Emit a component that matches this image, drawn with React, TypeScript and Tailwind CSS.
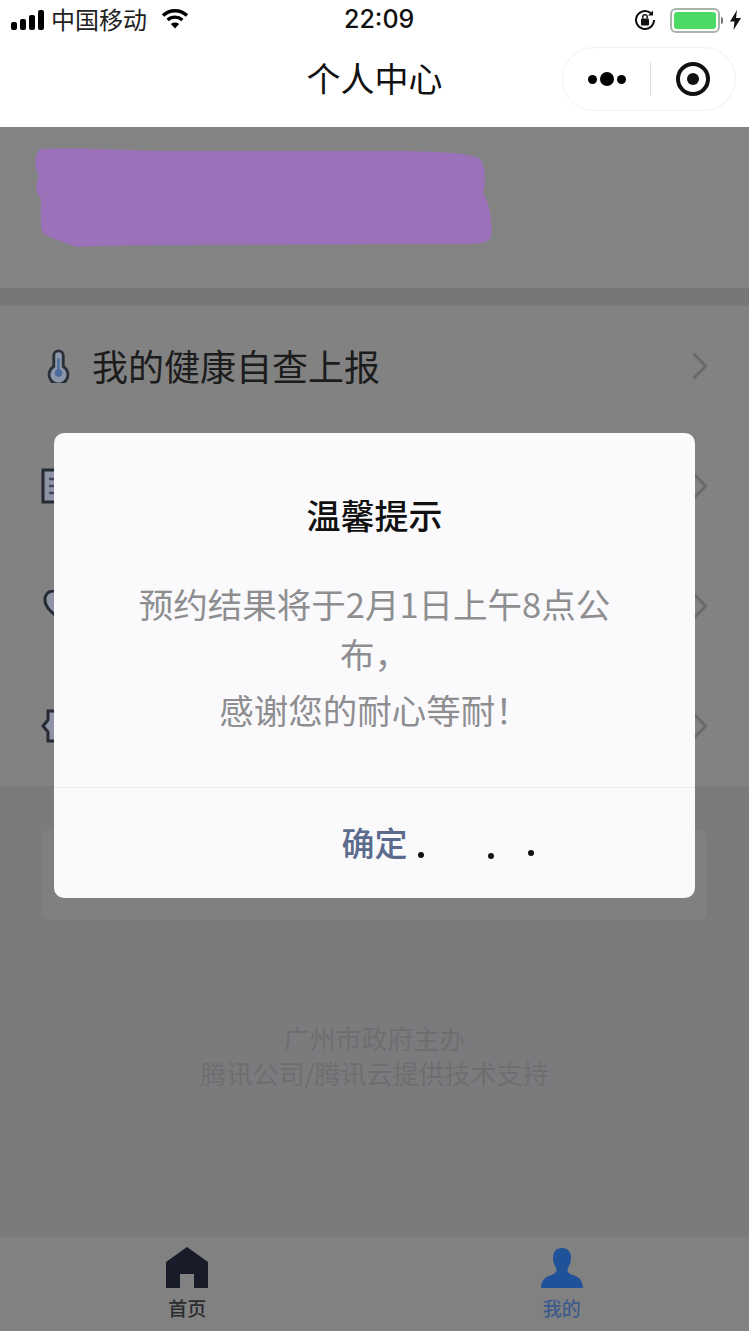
import type { ReactNode } from "react";
import { ChevronRight } from "lucide-react";

const CJK = "font-['Noto_Sans_CJK_SC','Noto_Sans',sans-serif]";

function StatusBar() {
  return (
    <div className="relative flex h-[40px] items-center bg-white pl-[11px] pr-[8px]">
      <div className="flex items-end gap-[3px] pb-[1px]">
        <span className="h-[8px] w-[6px] rounded-[2px] bg-black" />
        <span className="h-[11px] w-[6px] rounded-[2px] bg-black" />
        <span className="h-[15px] w-[6px] rounded-[2px] bg-black" />
        <span className="h-[20px] w-[6px] rounded-[2px] bg-black" />
      </div>
      <span className="-mt-[3px] ml-[7px] text-[24px] leading-none text-[#222]">中国移动</span>
      <svg className="ml-[14px] mb-[3px]" width="28" height="21" viewBox="0 0 28 21" fill="none" stroke="#000" strokeWidth="3.4">
        <path d="M2 7.5c7-6.4 17-6.4 24 0" />
        <path d="M6.6 12c4.400-3.800 10.400-3.800 14.800 0" />
        <path d="M14 20.500l-4.200-4.600c2.500-1.800 5.900-1.800 8.400 0z" fill="#000" stroke="none" />
      </svg>
      <span className="absolute left-[344px] top-[4px] font-['Inter',sans-serif] text-[25px] font-medium leading-[30px] text-[#111]">22:09</span>
      <div className="ml-auto flex items-center">
        <svg width="24" height="24" viewBox="0 0 24 24" fill="none" stroke="#111" strokeWidth="2">
          <path d="M21 12a9 9 0 1 1-3-6.700" />
          <path d="M20 2.500v5h-5" fill="#111" stroke="none" />
          <rect x="8" y="10.500" width="8" height="7" rx="1" fill="#111" stroke="none" />
          <path d="M9.800 10.500V9a2.200 2.200 0 0 1 4.400 0v1.500" strokeWidth="1.500" />
        </svg>
        <div className="ml-[13px] flex h-[25px] w-[50px] items-center rounded-[6px] border-2 border-[#a9b5a9] p-[2px]">
          <div className="h-full w-full rounded-[3px] bg-[#4cd964]" />
        </div>
        <span className="ml-[1px] h-[7px] w-[2px] rounded-r-full bg-[#777]" />
        <svg className="ml-[7px]" width="11" height="20" viewBox="0 0 11 20">
          <path d="M7 0L0 11.500h4.500L3.500 20 11 8H6z" fill="#111" />
        </svg>
      </div>
    </div>
  );
}

function NavBar() {
  return (
    <div className="relative flex h-[87px] items-center justify-center bg-white">
      <span className="-mt-[11px] text-[34px] leading-none text-[#111]">个人中心</span>
      <div className="absolute left-[562px] top-[7px] flex h-[64px] w-[174px] items-center rounded-full border border-[#f1f1f1] bg-white">
        <div className="flex w-[87px] items-center justify-center gap-[3px]">
          <span className="h-[9px] w-[9px] rounded-full bg-black" />
          <span className="h-[14px] w-[14px] rounded-full bg-black" />
          <span className="h-[9px] w-[9px] rounded-full bg-black" />
        </div>
        <span className="h-[34px] w-px bg-[#dcdcdc]" />
        <div className="flex flex-1 items-center justify-center">
          <span className="flex h-[34px] w-[34px] items-center justify-center rounded-full border-[4px] border-[#111]">
            <span className="h-[12px] w-[12px] rounded-full bg-[#111]" />
          </span>
        </div>
      </div>
    </div>
  );
}

// the hand-painted purple smear covering the user's name
function Scribble() {
  return (
    <svg width="462" height="100" viewBox="0 0 462 100">
      <path
        d="M6 2C60 0 90 4 150 4L370 4C410 5 436 6 446 12C452 19 452 38 449 45C456 56 459 80 457 90C453 98 440 97 420 97L150 98C100 98 60 99 42 100C34 96 24 95 10 87C5 80 7 64 7 52C1 46 1 36 5 29C0 20 0 8 6 2Z"
        fill="#9b72b9"
      />
    </svg>
  );
}

function ThermometerIcon() {
  return (
    <svg width="23" height="34" viewBox="0 0 24 36" fill="none">
      <path
        d="M7 18.500V7a5 5 0 0 1 10 0v11.500a10 10 0 1 1-10 0z"
        stroke="#2a3038"
        strokeWidth="3"
        fill="#8d95a8"
      />
      <path d="M12 11v14" stroke="#4a6ca0" strokeWidth="2.500" strokeLinecap="round" />
      <circle cx="12" cy="25.500" r="4" fill="#4a6ca0" />
    </svg>
  );
}

function ListIcon() {
  return (
    <svg width="36" height="36" viewBox="0 0 36 36" fill="#8f93a6" stroke="#252a33" strokeWidth="3">
      <rect x="2" y="2" width="32" height="32" />
      <path d="M8 11h20M8 18h20M8 25h20" strokeWidth="2.500" stroke="#434857" />
    </svg>
  );
}

function HeartIcon() {
  return (
    <svg className="ml-[2px]" width="36" height="32" viewBox="0 0 36 32" fill="#8f93a6" stroke="#252a33" strokeWidth="3">
      <path d="M18 30C8 22 2 17 2 10a8 8 0 0 1 16-2 8 8 0 0 1 16 2c0 7-6 12-16 20z" />
    </svg>
  );
}

function BadgeIcon() {
  return (
    <svg width="36" height="36" viewBox="0 0 36 36" fill="#8f93a6" stroke="#252a33" strokeWidth="3">
      <path d="M2 18l5-6V3h22v9l5 6-5 6v9H7v-9z" />
    </svg>
  );
}

function Arrow() {
  return <ChevronRight className="mr-[26px] h-[46px] w-[46px] text-[#6a6a6a]" strokeWidth={1.6} />;
}

function Row({ icon }: { icon: ReactNode }) {
  return (
    <div className="flex h-[120px] items-center">
      <div className="w-[92px] pl-[41px]">{icon}</div>
      <div className="flex-1" />
      <Arrow />
    </div>
  );
}

function TabBar() {
  return (
    <div className="flex h-[95px] border-t border-[#7a7a7a] bg-[#818181]">
      <div className="flex flex-1 flex-col items-center pt-[10px]">
        <svg width="42" height="42" viewBox="0 0 42 42">
          <path d="M21 0L42 15V41H28V27H14V41H0V15z" fill="#171c28" />
        </svg>
        <span className="mt-[7px] text-[19px] font-medium leading-[24px] text-[#2b2c30]">首页</span>
      </div>
      <div className="flex flex-1 flex-col items-center pt-[10px]">
        <svg width="42" height="42" viewBox="0 0 42 42">
          <path
            d="M21 1c6 0 9 4 9 10 0 5-2 8-3.500 11 0 3 1 4.500 5 6 6 2 10 4 10.500 13H0c.5-9 4.500-11 10.500-13 4-1.500 5-3 5-6C14 19 12 16 12 11c0-6 3-10 9-10z"
            fill="#1f5299"
          />
        </svg>
        <span className="mt-[7px] text-[19px] font-medium leading-[24px] text-[#3d5b8c]">我的</span>
      </div>
    </div>
  );
}

function Dialog() {
  return (
    <div className="absolute left-[54px] top-[433px] flex h-[465px] w-[641px] flex-col rounded-[10px] bg-[#fafafd]">
      <div className="flex-1 px-[80px] pt-[60px] text-center">
        <div className="text-[34px] font-medium leading-[44px] text-[#111]">温馨提示</div>
        <p className="mt-[41px] text-[34.5px] leading-[50px] text-[#8e8e90]">预约结果将于2月1日上午8点公布，</p>
        <p className="mt-[6px] text-[34.5px] leading-[50px] text-[#8e8e90]">感谢您的耐心等耐！</p>
      </div>
      <div className="relative flex h-[111px] items-center justify-center border-t border-[#ececee]">
        <span className="-mt-[2px] text-[33px] font-medium leading-none text-[#5a6b8c]">确定</span>
        <span className="absolute left-[364px] top-[64px] h-[6px] w-[6px] rounded-full bg-[#111]" />
        <span className="absolute left-[434px] top-[65px] h-[6px] w-[6px] rounded-full bg-[#111]" />
        <span className="absolute left-[474px] top-[62px] h-[6px] w-[6px] rounded-full bg-[#111]" />
      </div>
    </div>
  );
}

export default function App() {
  return (
    <div className={`relative flex h-[1331px] w-[749px] flex-col overflow-hidden bg-[#7b7b7d] ${CJK}`}>
      <StatusBar />
      <NavBar />
      <div className="h-[161px] bg-[#838383] pl-[34px] pt-[20px]">
        <Scribble />
      </div>
      <div className="h-[18px] bg-[#777777]" />
      <div className="h-[480px] bg-[#828282]">
        <div className="flex h-[120px] items-center">
          <div className="w-[92px] pl-[47px]">
            <ThermometerIcon />
          </div>
          <span className="-mt-[2px] flex-1 text-[36px] leading-none text-[#1c1c1c]">我的健康自查上报</span>
          <Arrow />
        </div>
        <Row icon={<ListIcon />} />
        <Row icon={<HeartIcon />} />
        <Row icon={<BadgeIcon />} />
      </div>
      <div className="mx-[42px] mt-[44px] h-[90px] rounded-[8px] bg-[#808082]" />
      <div className="mt-[100px] text-center text-[26px] leading-[35px] text-[#6e6e70]">
        <div>广州市政府主办</div>
        <div>腾讯公司/腾讯云提供技术支持</div>
      </div>
      <div className="flex-1" />
      <TabBar />
      <Dialog />
    </div>
  );
}
